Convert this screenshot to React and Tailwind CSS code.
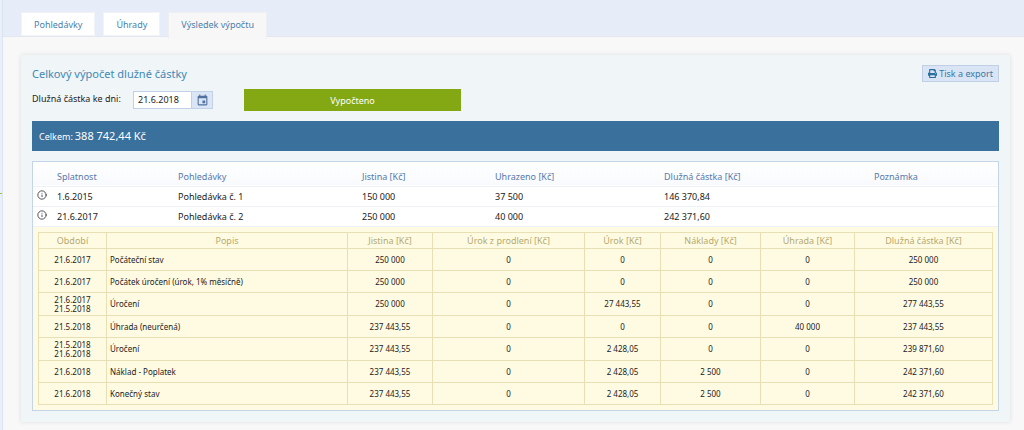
import React from "react";
import { FaPrint } from "react-icons/fa";
import { MdEvent } from "react-icons/md";
import { Info } from "lucide-react";

const tabs = [
    { label: 'Pohledávky' },
    { label: 'Úhrady' },
    { label: 'Výsledek výpočtu', active: true },
];

const claims = [
    { due: '1.6.2015', name: 'Pohledávka č. 1', principal: '150 000', paid: '37 500', owed: '146 370,84' },
    { due: '21.6.2017', name: 'Pohledávka č. 2', principal: '250 000', paid: '40 000', owed: '242 371,60' },
];

const details = [
    { period: ['21.6.2017'], text: 'Počáteční stav', values: ['250 000', '0', '0', '0', '0', '250 000'] },
    { period: ['21.6.2017'], text: 'Počátek úročení (úrok, 1% měsíčně)', values: ['250 000', '0', '0', '0', '0', '250 000'] },
    { period: ['21.6.2017', '21.5.2018'], text: 'Úročení', values: ['250 000', '0', '27 443,55', '0', '0', '277 443,55'] },
    { period: ['21.5.2018'], text: 'Úhrada (neurčená)', values: ['237 443,55', '0', '0', '0', '40 000', '237 443,55'] },
    { period: ['21.5.2018', '21.6.2018'], text: 'Úročení', values: ['237 443,55', '0', '2 428,05', '0', '0', '239 871,60'] },
    { period: ['21.6.2018'], text: 'Náklad - Poplatek', values: ['237 443,55', '0', '2 428,05', '2 500', '0', '242 371,60'] },
    { period: ['21.6.2018'], text: 'Konečný stav', values: ['237 443,55', '0', '2 428,05', '2 500', '0', '242 371,60'] },
];

const detailHeads = ['Období', 'Popis', 'Jistina [Kč]', 'Úrok z prodlení [Kč]', 'Úrok [Kč]', 'Náklady [Kč]', 'Úhrada [Kč]', 'Dlužná částka [Kč]'];

function Tabs() {
    return (
        <nav className="flex h-[37px] items-start gap-2 border-b border-[#e4e7ef] bg-[#e6ecf8] pt-3 pl-[18px]">
            {tabs.map((tab) => (
                <a
                    key={tab.label}
                    href="#"
                    className={tab.active
                        ? 'h-[27px] border border-b-0 border-[#eeeff2] bg-[#f7f7f7] px-3 leading-6 text-[#4a80ae]'
                        : 'h-6 border border-[#f1f3f7] bg-white px-3 leading-6 text-[#4a80ae]'}
                >
                    {tab.label}
                </a>
            ))}
        </nav>
    );
}

function DetailTable() {
    return (
        <table className="w-full table-fixed border-collapse text-center text-[8px] leading-[9px]">
            <colgroup>
                <col className="w-[68px]" />
                <col className="w-[241px]" />
                <col className="w-[85px]" />
                <col className="w-[152px]" />
                <col className="w-[76px]" />
                <col className="w-[100px]" />
                <col className="w-[94px]" />
                <col className="w-[138px]" />
            </colgroup>
            <thead>
                <tr className="h-4 text-[9px] text-[#b5aa70]">
                    {detailHeads.map((head) => (
                        <th key={head} className="border border-[#e9dfb4] p-0 font-normal">{head}</th>
                    ))}
                </tr>
            </thead>
            <tbody>
                {details.map((row, i) => (
                    <tr key={i} className={row.period.length > 1 ? 'h-[23px]' : 'h-[22px]'}>
                        <td className="border border-[#e9dfb4] p-0">
                            {row.period.map((date) => <div key={date}>{date}</div>)}
                        </td>
                        <td className="border border-[#e9dfb4] py-0 pr-0 pl-[3px] text-left">{row.text}</td>
                        {row.values.map((value, j) => (
                            <td key={j} className="border border-[#e9dfb4] p-0">{value}</td>
                        ))}
                    </tr>
                ))}
            </tbody>
        </table>
    );
}

function ClaimsTable() {
    return (
        <table className="w-full table-fixed border-collapse text-left">
            <colgroup>
                <col className="w-6" />
                <col className="w-[121px]" />
                <col className="w-[184px]" />
                <col className="w-[133px]" />
                <col className="w-[169px]" />
                <col className="w-[210px]" />
                <col className="w-[124px]" />
            </colgroup>
            <thead>
                <tr className="h-6 border-b border-[#eef2f8] bg-linear-to-b from-white to-[#f8fafd] text-[#5779ad]">
                    <td></td>
                    <th className="p-0 pt-[6px] font-normal">Splatnost</th>
                    <th className="p-0 pt-[6px] font-normal">Pohledávky</th>
                    <th className="p-0 pt-[6px] font-normal">Jistina [Kč]</th>
                    <th className="p-0 pt-[6px] font-normal">Uhrazeno [Kč]</th>
                    <th className="p-0 pt-[6px] font-normal">Dlužná částka [Kč]</th>
                    <th className="p-0 pt-[6px] font-normal">Poznámka</th>
                </tr>
            </thead>
            <tbody>
                {claims.map((claim) => (
                    <tr key={claim.name} className="h-5 border-b border-[#eef2f8]">
                        <td className="p-0 pb-[2px] pl-1">
                            <button type="button" aria-label="Detail" className="block">
                                <Info className="size-[10px] text-[#333]" />
                            </button>
                        </td>
                        <td className="p-0 pt-[2px]">{claim.due}</td>
                        <td className="p-0 pt-[2px]">{claim.name}</td>
                        <td className="p-0 pt-[2px]">{claim.principal}</td>
                        <td className="p-0 pt-[2px]">{claim.paid}</td>
                        <td className="p-0 pt-[2px]">{claim.owed}</td>
                        <td className="p-0"></td>
                    </tr>
                ))}
                <tr className="bg-[#fffbe3]">
                    <td colSpan={7} className="px-[5px] py-[5px]">
                        <DetailTable />
                    </td>
                </tr>
            </tbody>
        </table>
    );
}

export default function App() {
    return (
        <div className="flex min-h-screen bg-[#f8f8f8] font-['Noto_Sans','Open_Sans',sans-serif] text-[9px] leading-3 text-[#222]">
            <aside className="w-[3px] shrink-0 border-r border-[#dbe4f2] bg-[#eaf0f9] pt-[193px]">
                <div className="h-px bg-[#9cc63f]"></div>
            </aside>
            <div className="min-w-0 flex-1">
                <Tabs />
                <main className="mx-[18px] mt-[18px] mr-[14px] mb-2 bg-[#f0f5f8] px-[11px] pt-[10px] pb-[11px] shadow-[0_0_4px_#dddddd]">
                    <div className="flex h-[17px] items-center justify-between">
                        <h1 className="text-[11px] text-[#4189b4]">Celkový výpočet dlužné částky</h1>
                        <button type="button" className="flex h-[17px] items-center gap-[2px] border border-[#c0cfe6] bg-[#d9e5f5] px-[5px] text-[#3c77a5]">
                            <FaPrint className="size-[9px] text-[#2b6f9d]" />
                            Tisk a export
                        </button>
                    </div>
                    <div className="mt-[7px] flex h-[22px] items-center">
                        <label htmlFor="date" className="w-[101px] pb-[2px]">Dlužná částka ke dni:</label>
                        <div className="flex h-[18px] w-20 border border-[#c3d1e8] bg-white">
                            <input id="date" type="text" defaultValue="21.6.2018" className="w-[57px] px-1 text-[9px] outline-none" />
                            <button type="button" aria-label="Kalendář" className="flex flex-1 items-center justify-center border-l border-[#c3d1e8] bg-[#dae5f6] text-[#51729f]">
                                <MdEvent className="size-[13px]" />
                            </button>
                        </div>
                        <button type="button" className="ml-[31px] h-[22px] w-[217px] bg-[#83a814] pt-[2px] text-white">Vypočteno</button>
                    </div>
                    <div className="mt-[10px] flex h-[30px] items-baseline gap-[2px] bg-[#3a709c] px-[7px] pt-[9px] text-white">
                        <span>Celkem:</span>
                        <strong className="text-[11px] font-normal">388 742,44 Kč</strong>
                    </div>
                    <div className="mt-[10px] border border-[#c5d5e8] bg-white">
                        <ClaimsTable />
                    </div>
                </main>
            </div>
        </div>
    );
}
